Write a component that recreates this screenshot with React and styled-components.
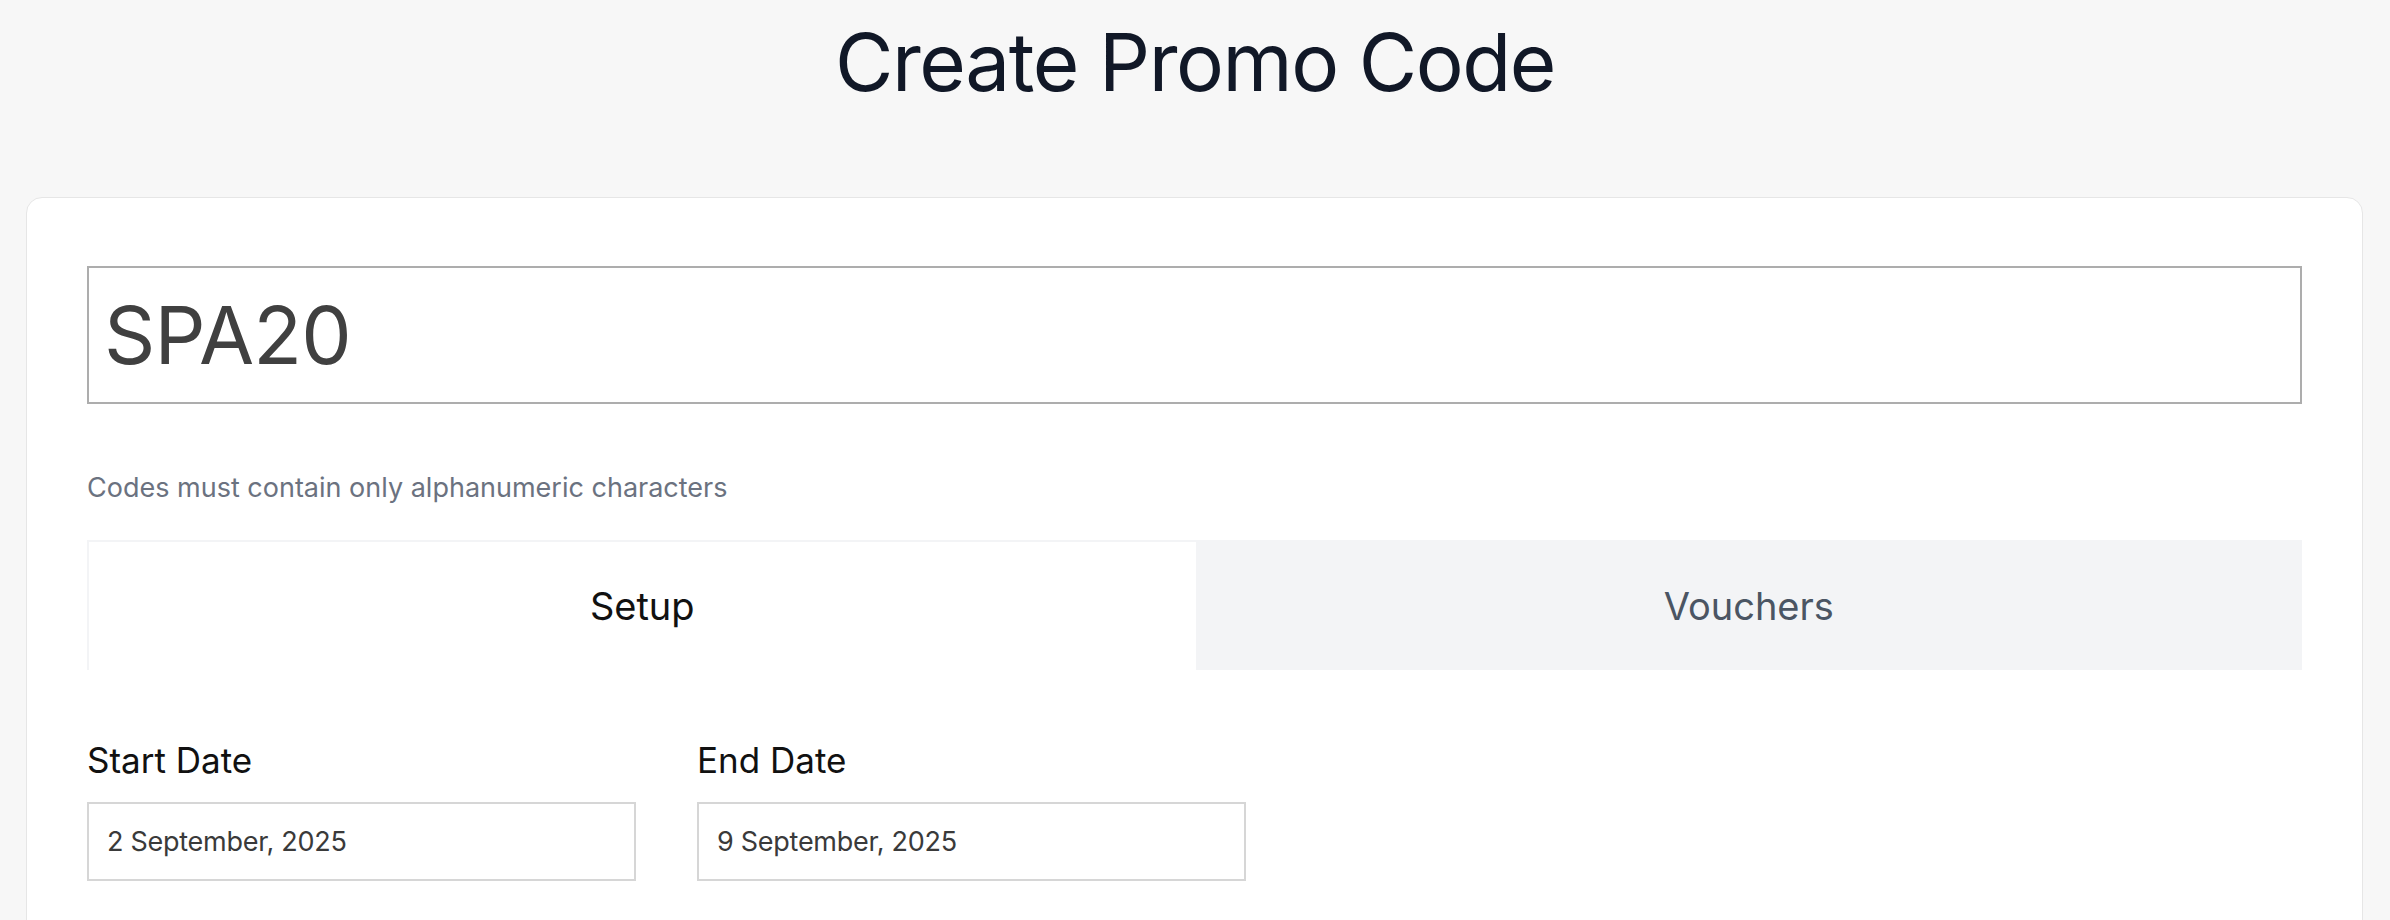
import React from "react";
import styled, { createGlobalStyle } from "styled-components";

const GlobalStyle = createGlobalStyle`
  html, body {
    margin: 0;
    padding: 0;
    background: #f7f7f7;
    font-family: Inter, "Liberation Sans", sans-serif;
  }
  * {
    box-sizing: border-box;
  }
`;

const Page = styled.div`
  display: flex;
  flex-direction: column;
  min-height: 920px;
`;

const Title = styled.h1`
  margin: 22px 0 0;
  font-size: 80px;
  line-height: 1;
  font-weight: 400;
  letter-spacing: -0.018em;
  color: #111827;
  text-align: center;
`;

const Card = styled.div`
  margin: 95px 27px 0 26px;
  background: #ffffff;
  border: 1px solid #e6e6e6;
  border-radius: 16px;
  padding: 68px 60px 200px;
  display: flex;
  flex-direction: column;
`;

const CodeInput = styled.div`
  height: 138px;
  border: 2px solid #adadad;
  display: flex;
  align-items: center;
  padding: 0 15px;
  font-size: 80px;
  line-height: 1;
  letter-spacing: -0.01em;
  color: #404040;
`;

const Hint = styled.p`
  margin: 70px 0 0;
  font-size: 27px;
  line-height: 1;
  color: #6b7280;
`;

const TabList = styled.div`
  margin-top: 39px;
  display: grid;
  grid-template-columns: 1fr 1fr;
  background: #f3f4f6;
  padding: 2px 0 0 2px;
`;

const Tab = styled.div`
  height: 128px;
  display: flex;
  align-items: center;
  justify-content: center;
  font-size: 38px;
  line-height: 1;
  background: ${(p) => (p.$active ? "#ffffff" : "#f3f4f6")};
  color: ${(p) => (p.$active ? "#111111" : "#4b5563")};
`;

const DateRow = styled.div`
  margin-top: 73px;
  display: grid;
  grid-template-columns: 549px 549px;
  column-gap: 61px;
`;

const Field = styled.div`
  display: flex;
  flex-direction: column;
`;

const Label = styled.label`
  font-size: 35px;
  line-height: 1;
  color: #111111;
`;

const DateBox = styled.div`
  margin-top: 24px;
  height: 79px;
  border: 2px solid #d6d6d6;
  display: flex;
  align-items: center;
  padding: 0 18px;
  font-size: 27px;
  line-height: 1;
  letter-spacing: -0.01em;
  color: #3a3a3a;
`;

export default function App() {
  return (
    <Page>
      <GlobalStyle />
      <Title>Create Promo Code</Title>
      <Card>
        <CodeInput>SPA20</CodeInput>
        <Hint>Codes must contain only alphanumeric characters</Hint>
        <TabList>
          <Tab $active>Setup</Tab>
          <Tab>Vouchers</Tab>
        </TabList>
        <DateRow>
          <Field>
            <Label>Start Date</Label>
            <DateBox>2 September, 2025</DateBox>
          </Field>
          <Field>
            <Label>End Date</Label>
            <DateBox>9 September, 2025</DateBox>
          </Field>
        </DateRow>
      </Card>
    </Page>
  );
}
